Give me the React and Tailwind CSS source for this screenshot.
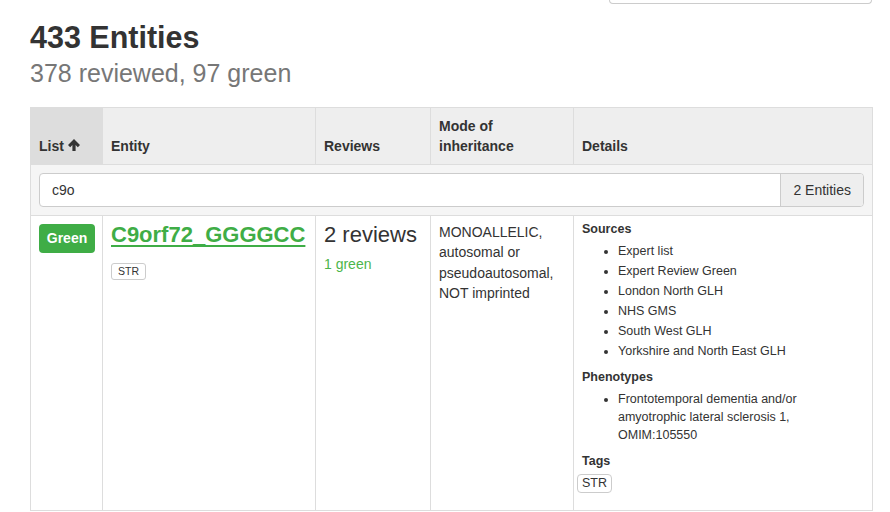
import React from 'react';

const sources = [
  'Expert list',
  'Expert Review Green',
  'London North GLH',
  'NHS GMS',
  'South West GLH',
  'Yorkshire and North East GLH',
];

function ArrowUpIcon() {
  return (
    <svg width="12" height="12" viewBox="0 0 12 12" className="inline-block ml-[4px] -mt-[3px]">
      <path d="M6 0 L12 6 L9.8 8.2 L7.6 6 V12 H4.4 V6 L2.2 8.2 L0 6 Z" fill="#333" />
    </svg>
  );
}

export default function App() {
  return (
    <div className="w-[890px] h-[512px] overflow-hidden bg-white text-[#333] text-[14px] leading-[20px] font-['Liberation_Sans',Arial,sans-serif]">
      {/* cut-off search box at top */}
      <div className="flex justify-end pr-[18px]">
        <div className="w-[263px] h-[4px] border border-t-0 border-[#ccc] rounded-b-[4px]" />
      </div>

      <div className="ml-[30px] w-[842px]">
        <h2 className="mt-[17px] text-[30.5px] leading-[33px] font-bold">433 Entities</h2>
        <div className="mt-[6px] text-[25px] leading-[27.5px] text-[#777]">378 reviewed, 97 green</div>

        <table className="mt-[19px] w-[842px] table-fixed border-collapse">
          <colgroup>
            <col className="w-[72px]" />
            <col className="w-[213px]" />
            <col className="w-[115px]" />
            <col className="w-[143px]" />
            <col className="w-[299px]" />
          </colgroup>
          <thead>
            <tr className="bg-[#eee]">
              <th className="bg-[#ddd] border border-[#ddd] p-2 align-bottom text-left font-bold">
                List<ArrowUpIcon />
              </th>
              <th className="border border-[#ddd] p-2 align-bottom text-left font-bold">Entity</th>
              <th className="border border-[#ddd] p-2 align-bottom text-left font-bold">Reviews</th>
              <th className="border border-[#ddd] p-2 align-bottom text-left font-bold">Mode of inheritance</th>
              <th className="border border-[#ddd] p-2 align-bottom text-left font-bold">Details</th>
            </tr>
          </thead>
          <tbody>
            <tr className="bg-[#f5f5f5]">
              <td colSpan={5} className="border border-[#ddd] p-2">
                <div className="flex h-[34px] border border-[#ccc] rounded-[4px] bg-white overflow-hidden">
                  <div className="flex-1 px-3 flex items-center">c9o</div>
                  <div className="px-3 flex items-center bg-[#eee] border-l border-[#ccc]">2 Entities</div>
                </div>
              </td>
            </tr>
            <tr>
              <td className="border border-[#ddd] px-2 pt-[6px] align-top">
                <div className="mt-[2px] w-[56px] h-[29px] rounded-[4px] bg-[#3fad46] text-white font-bold flex items-center justify-center">
                  Green
                </div>
              </td>
              <td className="border border-[#ddd] px-2 pt-[6px] align-top">
                <a className="block text-[22px] leading-[26px] font-bold text-[#3fad46] underline decoration-2 underline-offset-[3px] whitespace-nowrap">
                  C9orf72_GGGGCC
                </a>
                <span className="mt-[15px] inline-flex items-center h-[17px] px-[6px] border border-[#ccc] rounded-[3px] text-[10.5px] leading-none">
                  STR
                </span>
              </td>
              <td className="border border-[#ddd] px-2 pt-[6px] align-top">
                <div className="text-[22px] leading-[26px] whitespace-nowrap">2 reviews</div>
                <div className="mt-[6px] text-[#4cb54a]">1 green</div>
              </td>
              <td className="border border-[#ddd] px-2 pt-[6px] align-top leading-[20.5px]">
                MONOALLELIC, autosomal or pseudoautosomal, NOT imprinted
              </td>
              <td className="border border-[#ddd] px-2 pt-[6px] pb-[17px] align-top text-[12.5px]">
                <div className="font-bold leading-[14px]">Sources</div>
                <ul className="mt-[5px] pl-[36px] list-disc leading-[20px]">
                  {sources.map((s) => (
                    <li key={s}>{s}</li>
                  ))}
                </ul>
                <div className="mt-[9px] font-bold leading-[14px]">Phenotypes</div>
                <ul className="mt-[6px] pl-[36px] list-disc leading-[18px]">
                  <li>Frontotemporal dementia and/or amyotrophic lateral sclerosis 1, OMIM:105550</li>
                </ul>
                <div className="mt-[10px] font-bold leading-[14px]">Tags</div>
                <span className="mt-[6px] -ml-[5px] inline-flex items-center h-[19px] px-[4px] border border-[#ccc] rounded-[4px]">
                  STR
                </span>
              </td>
            </tr>
          </tbody>
        </table>
      </div>
    </div>
  );
}
